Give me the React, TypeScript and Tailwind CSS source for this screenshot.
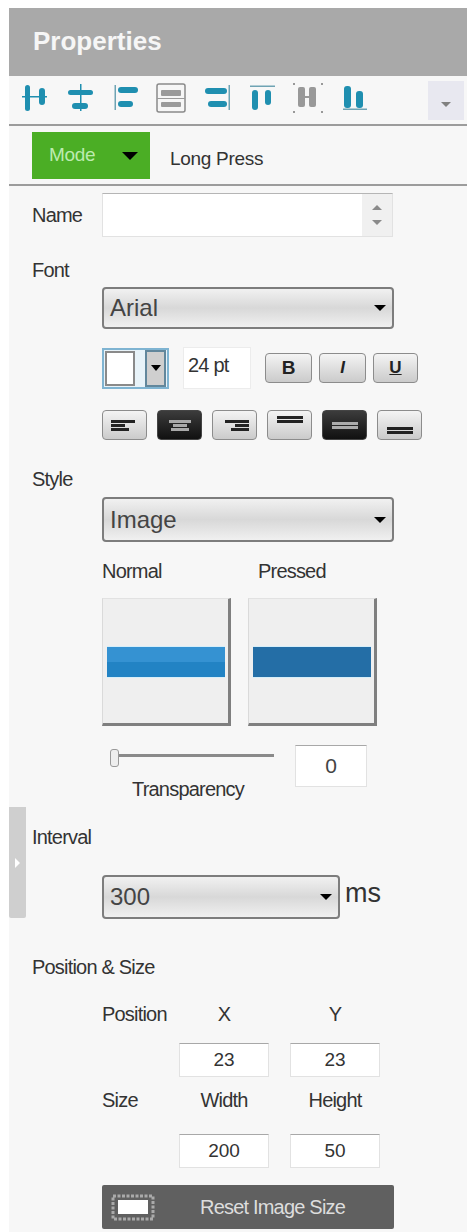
import type { ReactNode } from "react";

const sans = "font-['Liberation_Sans',Arial,sans-serif]";
const label = "h-[21px] leading-[21px] text-[#333] text-[20px] tracking-[-0.8px]";

// toolbar icons, viewBox uses the icon's own x range
const toolIcons: { x: number; w: number; cls: string; body: ReactNode }[] = [
  {
    x: 22, w: 25, cls: "",
    body: <g fill="#1f8fb0"><rect x="25" y="85" width="5" height="26" rx="2.5" /><rect x="39" y="88" width="6" height="17" rx="3" /><rect x="22" y="96" width="25" height="1.5" /></g>,
  },
  {
    x: 68, w: 26, cls: "ml-[21px]",
    body: <g fill="#1f8fb0"><rect x="68" y="90" width="25" height="5" rx="2.5" /><rect x="72" y="103" width="16" height="6" rx="3" /><rect x="80" y="84" width="1.5" height="27" /></g>,
  },
  {
    x: 114, w: 26, cls: "ml-[20px]",
    body: <g fill="#1f8fb0"><rect x="114.5" y="85" width="1.5" height="25" fill="#6fa3b3" /><rect x="118" y="87" width="20" height="6" rx="3" /><rect x="118" y="101" width="15" height="6" rx="3" /></g>,
  },
  {
    x: 156, w: 30, cls: "ml-[16px]",
    body: <g><rect x="157" y="84" width="28" height="28" rx="2" fill="#f6f6f6" stroke="#8a8a8a" strokeWidth="1.5" /><rect x="161" y="90" width="20" height="6" rx="1" fill="#9a9a9a" /><rect x="161" y="102" width="20" height="5" rx="1" fill="#9a9a9a" /><rect x="157" y="98" width="28" height="1" fill="#9a9a9a" /></g>,
  },
  {
    x: 204, w: 26, cls: "ml-[18px]",
    body: <g fill="#1f8fb0"><rect x="205" y="88" width="22" height="6" rx="3" /><rect x="208" y="101" width="19" height="6" rx="3" /><rect x="228.5" y="85" width="1.5" height="25" fill="#6fa3b3" /></g>,
  },
  {
    x: 250, w: 26, cls: "ml-[20px]",
    body: <g fill="#1f8fb0"><rect x="250" y="85.5" width="25" height="1.5" fill="#6fa3b3" /><rect x="252" y="90" width="6" height="20" rx="3" /><rect x="265" y="90" width="6" height="15" rx="3" /></g>,
  },
  {
    x: 292, w: 32, cls: "ml-[16px]",
    body: <g fill="#999"><rect x="298" y="87" width="7" height="20" rx="2" /><rect x="309" y="87" width="7" height="20" rx="2" /><rect x="305" y="96" width="4" height="2" /><rect x="293" y="83" width="2" height="2" /><rect x="321" y="83" width="2" height="2" /><rect x="293" y="111" width="2" height="2" /><rect x="321" y="111" width="2" height="2" /></g>,
  },
  {
    x: 342, w: 26, cls: "ml-[18px]",
    body: <g fill="#1f8fb0"><rect x="343" y="108.5" width="24" height="1.5" fill="#6fa3b3" /><rect x="344" y="86" width="7" height="22" rx="3" /><rect x="356" y="91" width="7" height="17" rx="3" /></g>,
  },
];

function Arrow({ className }: { className: string }) {
  return <span className={`block w-0 h-0 border-x-[6px] border-x-transparent border-t-[6px] ${className}`} />;
}

function Select({ value, width, height }: { value: string; width: string; height: string }) {
  return (
    <div className={`${width} ${height} ml-[93px] flex items-center justify-between pl-[6px] pr-[6px] rounded-[4px] border-2 border-[#7d7d7d] bg-gradient-to-b from-[#f1f1f1] via-[#d8d8d8] to-[#f0f0f0] text-[#444] text-[24px]`}>
      <span>{value}</span>
      <Arrow className="border-t-black" />
    </div>
  );
}

function GlossButton({ dark, width, children }: { dark?: boolean; width: string; children: ReactNode }) {
  return (
    <div className={`${width} h-[30px] rounded-[4px] flex items-center justify-center ${dark ? "bg-gradient-to-b from-[#3c3c3c] to-[#111] border border-[#444]" : "bg-gradient-to-b from-[#f4f4f4] to-[#cbcbcb] border border-[#8c8c8c]"}`}>
      {children}
    </div>
  );
}

function Lines({ widths, align, color, pos = "center" }: { widths: number[]; align: string; color: string; pos?: string }) {
  return (
    <div className={`w-[28px] h-full flex flex-col gap-[1px] py-[5px] ${align} ${pos === "top" ? "justify-start" : pos === "bottom" ? "justify-end" : "justify-center"}`}>
      {widths.map((w, i) => (
        <span key={i} className={`block h-[3px] ${color}`} style={{ width: w }} />
      ))}
    </div>
  );
}

function NumBox({ value, width }: { value: string; width: string }) {
  return (
    <div className={`${width} h-[34px] bg-white border border-[#e2e2e2] border-t-[#a8a8a8] flex items-center justify-center text-[#333] text-[19px]`}>
      {value}
    </div>
  );
}

function Swatch({ color, top }: { color: string; top: string }) {
  return (
    <div className="w-[129px] h-[128px] bg-[#efefef] border-r-[3px] border-b-[3px] border-[#7f7f7f] border-l border-l-[#dadada] border-t border-t-[#e2e2e2] flex flex-col justify-center pl-[4px] pr-[3px]">
      <div className={`h-[32px] mt-[1px] border-y border-[#d6eef9] ${color}`}>
        <div className={`h-[15px] ${top}`} />
      </div>
    </div>
  );
}

export default function App() {
  return (
    <div className={`${sans} w-[468px] h-[1232px] bg-white overflow-hidden pt-[8px] pl-[9px]`}>
      <div className="w-[458px] h-[1224px] bg-[#f7f7f7] relative">
        {/* title bar */}
        <div className="h-[68px] bg-[#a9a9a9] flex items-center pl-[24px]">
          <span className="text-white/90 font-bold text-[26px] leading-none -mt-[2px]">Properties</span>
        </div>

        {/* alignment toolbar */}
        <div className="h-[48px] flex items-start pt-[6px] pl-[13px] relative">
          {toolIcons.map((icon) => (
            <svg key={icon.x} className={`shrink-0 ${icon.cls}`} width={icon.w} height="32" viewBox={`${icon.x} 82 ${icon.w} 32`}>
              {icon.body}
            </svg>
          ))}
          <div className="absolute right-[3px] top-[5px] w-[36px] h-[39px] bg-[#e8e8f0] flex items-center justify-center">
            <Arrow className="!border-x-[5px] !border-t-[5px] border-t-[#808080] mt-[8px]" />
          </div>
        </div>
        <div className="h-[2px] bg-[#9c9c9c]" />

        {/* mode */}
        <div className="h-[58px] flex items-start pt-[6px] pl-[23px]">
          <div className="w-[118px] h-[47px] bg-[#4bae25] flex items-center justify-between pl-[17px] pr-[12px]">
            <span className="text-[#bdebb0] text-[19px] tracking-[-0.3px]">Mode</span>
            <Arrow className="!border-x-[8px] !border-t-[8px] border-t-black" />
          </div>
          <span className="ml-[20px] mt-[15px] text-[#333] text-[19px] tracking-[-0.3px] leading-[24px]">Long Press</span>
        </div>
        <div className="h-[2px] bg-[#9c9c9c]" />

        {/* name */}
        <div className="mt-[7px] flex items-center">
          <span className={`ml-[23px] w-[70px] ${label}`}>Name</span>
          <div className="w-[291px] h-[44px] bg-white border border-[#e2e2e2] border-t-[#b5b5b5] flex justify-end">
            <div className="w-[30px] bg-[#f0f0f0] flex flex-col items-center justify-center gap-[10px]">
              <Arrow className="rotate-180 !border-x-[5px] !border-t-[5px] border-t-[#8a8a8a]" />
              <Arrow className="!border-x-[5px] !border-t-[5px] border-t-[#8a8a8a]" />
            </div>
          </div>
        </div>

        {/* font */}
        <div className={`mt-[23px] ml-[23px] ${label}`}>Font</div>
        <div className="mt-[6px]">
          <Select value="Arial" width="w-[292px]" height="h-[42px]" />
        </div>
        <div className="mt-[18px] ml-[93px] flex items-center h-[42px]">
          <div className="w-[67px] h-[41px] border-2 border-[#7fb4d2] bg-[#e8f3f9] flex">
            <div className="m-[1px] w-[30px] bg-white border-2 border-[#8a8a8a]" />
            <div className="ml-[9px] w-[21px] border-2 border-[#62879c] bg-[#cfcfcf] flex items-center justify-center">
              <Arrow className="!border-x-[5px] border-t-black" />
            </div>
          </div>
          <div className="ml-[14px] w-[68px] h-[42px] bg-white border border-[#ececec] text-[#333] text-[20px] tracking-[-0.8px] leading-[24px] pl-[4px] pt-[5px]">24 pt</div>
          <div className="ml-[14px] flex gap-[7px]">
            <GlossButton width="w-[47px]"><span className="font-bold text-[19px] text-[#222]">B</span></GlossButton>
            <GlossButton width="w-[47px]"><span className="font-bold italic text-[17px] text-[#222]">I</span></GlossButton>
            <GlossButton width="w-[45px]"><span className="font-bold underline text-[17px] text-[#222]">U</span></GlossButton>
          </div>
        </div>
        <div className="mt-[21px] ml-[93px] flex gap-[10px]">
          <GlossButton width="w-[45px]"><Lines widths={[24, 14, 18]} align="items-start" color="bg-[#222]" /></GlossButton>
          <GlossButton dark width="w-[45px]"><Lines widths={[22, 14, 18]} align="items-center" color="bg-[#aaa]" /></GlossButton>
          <GlossButton width="w-[45px]"><Lines widths={[24, 14, 18]} align="items-end" color="bg-[#222]" /></GlossButton>
          <GlossButton width="w-[45px]"><Lines widths={[26, 26]} align="items-center" color="bg-[#222]" pos="top" /></GlossButton>
          <GlossButton dark width="w-[45px]"><Lines widths={[26, 26]} align="items-center" color="bg-[#aaa]" /></GlossButton>
          <GlossButton width="w-[45px]"><Lines widths={[26, 26]} align="items-center" color="bg-[#222]" pos="bottom" /></GlossButton>
        </div>

        {/* style */}
        <div className={`mt-[29px] ml-[23px] ${label}`}>Style</div>
        <div className="mt-[7px]">
          <Select value="Image" width="w-[292px]" height="h-[45px]" />
        </div>
        <div className={`mt-[19px] ml-[93px] flex ${label}`}>
          <span className="w-[156px]">Normal</span>
          <span>Pressed</span>
        </div>
        <div className="mt-[16px] ml-[93px] flex gap-[17px]">
          <Swatch color="bg-[#2283c4]" top="bg-[#3592d2]" />
          <Swatch color="bg-[#246ea6]" top="bg-[#246ea6]" />
        </div>

        {/* transparency */}
        <div className="mt-[19px] ml-[101px] flex items-start">
          <div className="w-[164px] h-[24px] relative">
            <div className="w-full h-[3px] bg-[#8a8a8a] mt-[9px]" />
            <div className="absolute left-0 top-[4px] w-[9px] h-[18px] bg-[#eee] border border-[#999] rounded-[3px]" />
          </div>
          <div className="ml-[21px] w-[72px] h-[42px] bg-white border border-[#e2e2e2] border-t-[#a8a8a8] flex items-center justify-center text-[#444] text-[21px]">0</div>
        </div>
        <div className={`ml-[123px] -mt-[8px] ${label}`}>Transparency</div>

        {/* interval */}
        <div className={`mt-[27px] ml-[23px] ${label}`}>Interval</div>
        <div className="mt-[27px] flex items-start">
          <Select value="300" width="w-[238px]" height="h-[44px]" />
          <span className="ml-[5px] mt-[4px] text-[27px] leading-[28px] text-[#333]">ms</span>
        </div>

        {/* position & size */}
        <div className={`mt-[38px] ml-[23px] ${label}`}>Position &amp; Size</div>
        <div className={`mt-[26px] ml-[93px] grid grid-cols-[77px_90px_21px_90px] ${label}`}>
          <span>Position</span>
          <span className="text-center">X</span>
          <span />
          <span className="text-center">Y</span>
        </div>
        <div className="mt-[18px] ml-[170px] flex gap-[21px]">
          <NumBox value="23" width="w-[90px]" />
          <NumBox value="23" width="w-[90px]" />
        </div>
        <div className={`mt-[13px] ml-[93px] grid grid-cols-[77px_90px_21px_90px] ${label}`}>
          <span>Size</span>
          <span className="text-center">Width</span>
          <span />
          <span className="text-center">Height</span>
        </div>
        <div className="mt-[23px] ml-[170px] flex gap-[21px]">
          <NumBox value="200" width="w-[90px]" />
          <NumBox value="50" width="w-[90px]" />
        </div>
        <div className="mt-[17px] ml-[93px] w-[292px] h-[44px] bg-[#606060] rounded-[2px] flex items-center">
          <svg className="ml-[9px] shrink-0" width="44" height="28" viewBox="0 0 44 28">
            <rect x="2" y="3" width="40" height="23" fill="none" stroke="#aaa" strokeWidth="3" strokeDasharray="3 1.5" />
            <rect x="7" y="7" width="30" height="14" fill="#fff" />
          </svg>
          <span className="ml-[45px] text-[#ddd] text-[20px] tracking-[-0.8px]">Reset Image Size</span>
        </div>

        {/* collapse handle */}
        <div className="absolute left-0 top-[799px] w-[17px] h-[111px] bg-[#cfcfcf] flex items-center justify-center rounded-b-[2px]">
          <span className="block w-0 h-0 border-y-[5px] border-y-transparent border-l-[5px] border-l-white" />
        </div>
      </div>
    </div>
  );
}
